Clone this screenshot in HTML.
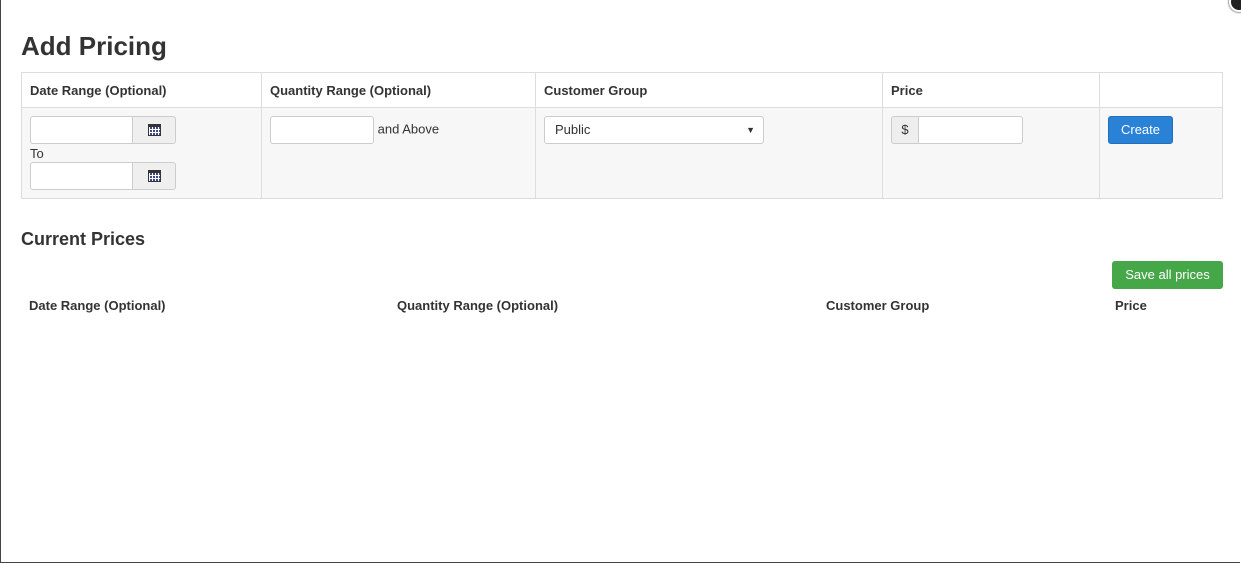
<!DOCTYPE html>
<html><head><style>
body{margin:0;width:1241px;height:564px;overflow:hidden;background:#fff;font-family:"Liberation Sans",sans-serif;color:#333;position:relative}
.frame{position:absolute;left:0;top:0;width:1240px;height:563px;border-left:1px solid #444;border-bottom:1px solid #444;box-sizing:border-box}
.close{position:absolute;left:1229px;top:-8px;width:16px;height:16px;border-radius:50%;background:#222;border:2px solid #fff;box-shadow:0 0 2px #000}
h1{position:absolute;left:21px;top:31px;margin:0;font-size:26px;font-weight:bold}
table.t{position:absolute;left:21px;top:72px;border-collapse:collapse;width:1202px}
table.t td,table.t th{border:1px solid #ddd;font-size:13px;text-align:left;vertical-align:top}
table.t th{height:34px;padding:0 8px;vertical-align:middle}
table.t td{background:#f7f7f7;height:74px;padding:8px}
.inp{display:inline-block;height:26px;border:1px solid #ccc;border-radius:3px;background:#fff;box-sizing:border-box;vertical-align:middle}
.grp{display:flex;width:146px;height:28px}
.grp .a{flex:1;border:1px solid #ccc;border-radius:3px 0 0 3px;background:#fff}
.grp .b{width:42px;border:1px solid #ccc;border-left:none;border-radius:0 3px 3px 0;background:#efefef;display:flex;align-items:center;justify-content:center}
.cal{width:11px;height:8px;border:1px solid #333;border-top-width:3px;background:
repeating-linear-gradient(90deg,#fff 0 1px,transparent 1px 3px),repeating-linear-gradient(0deg,#3a4a8a 0 2px,#fff 2px 3px)}
.btn{display:inline-block;color:#fff;font-size:13px;border-radius:3px}
h2{position:absolute;left:21px;top:229px;margin:0;font-size:18px;font-weight:bold}
.h{position:absolute;top:298px;font-size:13px;font-weight:bold}
</style></head><body>
<div class="frame"></div><div class="close"></div>
<h1>Add Pricing</h1>
<table class="t"><tr><th style="width:223px">Date Range (Optional)</th><th style="width:257px">Quantity Range (Optional)</th><th style="width:330px">Customer Group</th><th style="width:200px">Price</th><th></th></tr>
<tr><td><div class="grp"><div class="a"></div><div class="b"><div class="cal"></div></div></div><div style="margin:2px 0 1px;font-size:13px">To</div><div class="grp"><div class="a"></div><div class="b"><div class="cal"></div></div></div></td>
<td><span class="inp" style="width:104px;height:28px"></span> <span style="font-size:13px">and Above</span></td>
<td><div class="inp" style="width:220px;height:28px;position:relative;font-size:13px;line-height:26px;padding-left:10px">Public<span style="position:absolute;right:8px;font-size:9px">▼</span></div></td>
<td><div style="display:flex;height:28px"><div style="width:28px;border:1px solid #ccc;border-radius:3px 0 0 3px;background:#eee;font-size:13px;line-height:26px;text-align:center;box-sizing:border-box">$</div><div style="width:103px;border:1px solid #ccc;border-left:none;border-radius:0 3px 3px 0;background:#fff"></div></div></td>
<td><span class="btn" style="background:#2a82d6;border:1px solid #1f6fbd;width:63px;height:26px;line-height:26px;text-align:center">Create</span></td></tr></table>
<h2>Current Prices</h2>
<span class="btn" style="position:absolute;left:1112px;top:261px;width:111px;height:28px;line-height:28px;text-align:center;background:#46a748;border:0">Save all prices</span>
<div class="h" style="left:29px">Date Range (Optional)</div>
<div class="h" style="left:397px">Quantity Range (Optional)</div>
<div class="h" style="left:826px">Customer Group</div>
<div class="h" style="left:1115px">Price</div>
</body></html>
